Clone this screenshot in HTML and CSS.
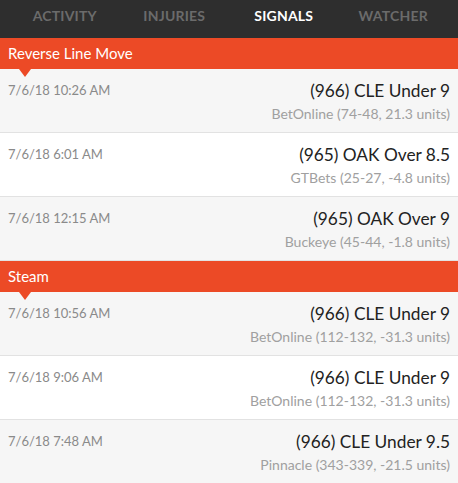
FILE: index.html
```html
<!DOCTYPE html>
<html>
<head>
<meta charset="utf-8">
<link rel="stylesheet" href="styles.css">
</head>
<body>
<nav class="tabs">
  <div class="tab">ACTIVITY</div>
  <div class="tab">INJURIES</div>
  <div class="tab active">SIGNALS</div>
  <div class="tab">WATCHER</div>
</nav>
<section>
  <div class="section-head">Reverse Line Move</div>
  <div class="row odd">
    <div class="date">7/6/18 10:26 AM</div>
    <div class="info"><div class="pick">(966) CLE Under 9</div><div class="book">BetOnline (74-48, 21.3 units)</div></div>
  </div>
  <div class="row">
    <div class="date">7/6/18 6:01 AM</div>
    <div class="info"><div class="pick">(965) OAK Over 8.5</div><div class="book">GTBets (25-27, -4.8 units)</div></div>
  </div>
  <div class="row odd">
    <div class="date">7/6/18 12:15 AM</div>
    <div class="info"><div class="pick">(965) OAK Over 9</div><div class="book">Buckeye (45-44, -1.8 units)</div></div>
  </div>
</section>
<section>
  <div class="section-head">Steam</div>
  <div class="row odd">
    <div class="date">7/6/18 10:56 AM</div>
    <div class="info"><div class="pick">(966) CLE Under 9</div><div class="book">BetOnline (112-132, -31.3 units)</div></div>
  </div>
  <div class="row">
    <div class="date">7/6/18 9:06 AM</div>
    <div class="info"><div class="pick">(966) CLE Under 9</div><div class="book">BetOnline (112-132, -31.3 units)</div></div>
  </div>
  <div class="row odd">
    <div class="date">7/6/18 7:48 AM</div>
    <div class="info"><div class="pick">(966) CLE Under 9.5</div><div class="book">Pinnacle (343-339, -21.5 units)</div></div>
  </div>
</section>
</body>
</html>
```
FILE: styles.css
```css
html, body {
  margin: 0;
  padding: 0;
  background: #ffffff;
  font-family: "Lato", "Open Sans", sans-serif;
  overflow: hidden;
}
.tabs {
  display: flex;
  height: 38px;
  background: #2e2e2e;
  padding-left: 10px;
  padding-bottom: 7px;
  box-sizing: border-box;
  align-items: center;
}
.tab {
  width: 109.5px;
  text-align: center;
  font-weight: 700;
  font-size: 14px;
  color: #6b6b6b;
  letter-spacing: 0.2px;
}
.tab.active {
  color: #ffffff;
}
.section-head {
  position: relative;
  height: 31px;
  background: #ec4a26;
  color: #ffffff;
  font-size: 15px;
  line-height: 31px;
  padding-left: 8px;
}
.section-head::after {
  content: "";
  position: absolute;
  left: 19px;
  bottom: -8px;
  border-left: 6.5px solid transparent;
  border-right: 6.5px solid transparent;
  border-top: 8px solid #ec4a26;
  z-index: 2;
}
.row {
  display: flex;
  justify-content: space-between;
  height: 51px;
  border-bottom: 1px solid #e2e2e2;
  padding: 12px 8px 0 8px;
  background: #ffffff;
}
.row.odd {
  background: #f6f6f6;
}
.date {
  font-size: 13px;
  color: #8a8a8a;
  line-height: 19px;
}
.info {
  text-align: right;
}
.pick {
  font-size: 17.3px;
  color: #222222;
  line-height: 19px;
}
.book {
  font-size: 14px;
  color: #a0a0a0;
  line-height: 20px;
  margin-top: 4px;
}
```
